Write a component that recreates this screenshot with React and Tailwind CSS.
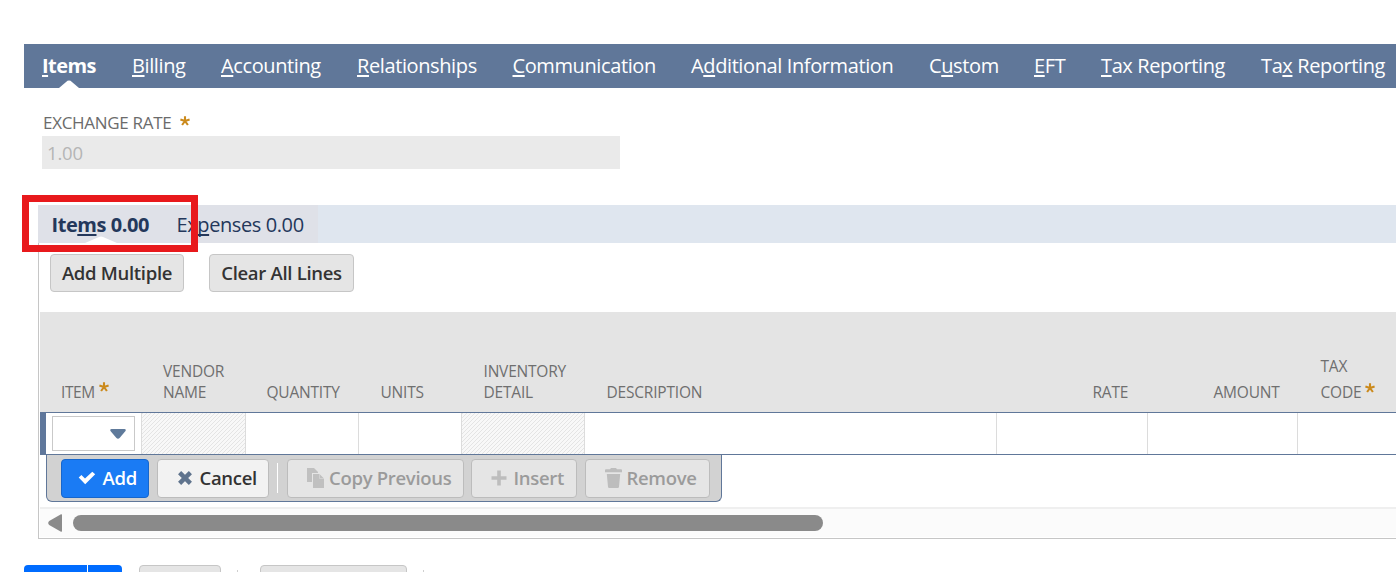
import React from "react";

const Star = ({ className = "" }) => (
  <svg viewBox="0 0 10 10" className={`h-[10px] w-[10px] shrink-0 ${className}`} fill="none" stroke="#cb8a1c" strokeWidth="2.1">
    <path d="M5 5V0.3M5 5L9.6 3.5M5 5L7.9 9M5 5L2.1 9M5 5L0.4 3.5" />
  </svg>
);

const CheckIcon = () => (
  <svg viewBox="0 0 18 14" className="h-[14px] w-[18px] shrink-0" fill="#fff">
    <path d="M0.7 6.6L3.4 4L7 7.4L14.3 0.7L17.2 3.2L7.2 13.2Z" />
  </svg>
);

const TimesIcon = () => (
  <svg viewBox="0 0 14 14" className="h-[14px] w-[14px] shrink-0" fill="none" stroke="#5f738d" strokeWidth="4.4">
    <path d="M1.6 1.6L12.4 12.4M12.4 1.6L1.6 12.4" />
  </svg>
);

const CopyIcon = () => (
  <svg viewBox="0 0 17 20" className="h-5 w-[17px] shrink-0" fill="#c0c0c0">
    <path d="M0 0H7L11 4V5H5V14H0Z" />
    <path d="M6 6H12.5L17 10.5V20H6Z" />
    <path d="M12.5 6V10.5H17" fill="none" stroke="#d6d6d6" strokeWidth="0.8" />
  </svg>
);

const PlusIcon = () => (
  <svg viewBox="0 0 16 16" className="h-4 w-4 shrink-0" fill="none" stroke="#bdbdbd" strokeWidth="3.6">
    <path d="M8 0.5V15.5M0.5 8H15.5" />
  </svg>
);

const TrashIcon = () => (
  <svg viewBox="0 0 17 20" className="h-5 w-[17px] shrink-0" fill="#bdbdbd">
    <path d="M0 2.2Q0 1.3 1 1.3H5L6 0H11L12 1.3H16Q17 1.3 17 2.2V4.3H0ZM1.8 6H15.2L14 18.8Q13.9 20 12.8 20H4.2Q3.1 20 3 18.8Z" />
  </svg>
);

const Key = ({ children }) => (
  <span className="underline decoration-[1.5px] underline-offset-[2px] [text-decoration-skip-ink:none]">{children}</span>
);

const tabs = [
  ["", "I", "tems", "w-[90px] font-bold tracking-[-0.55px]"],
  ["", "B", "illing", "w-[89px]"],
  ["", "A", "ccounting", "w-[136px]"],
  ["", "R", "elationships", "w-[155.5px]"],
  ["", "C", "ommunication", "w-[178.5px]"],
  ["A", "d", "ditional Information", "w-[238px]"],
  ["C", "u", "stom", "w-[105px]"],
  ["", "E", "FT", "w-[67px]"],
  ["", "T", "ax Reporting", "w-[160px]"],
  ["Ta", "x", " Reporting", "w-[136px]"],
];

const hatch = "bg-[repeating-linear-gradient(135deg,#e4e4e4_0_1px,#f8f8f8_1px_2.83px)]";

const cells = [
  "w-[104px] " + hatch,
  "w-[113px]",
  "w-[103px]",
  "w-[123px] " + hatch,
  "w-[412px]",
  "w-[151px]",
  "w-[150px]",
  "w-[98px]",
];

const btn = "flex shrink-0 items-center rounded-[4px] border-[1.5px] whitespace-nowrap font-semibold text-[18.5px] tracking-[-0.3px]";
const disabled = "border-[#bcbcbc] bg-[#e5e5e5] text-[#9b9b9b]";

export default function App() {
  return (
    <div className="relative h-[572px] w-[1396px] overflow-hidden bg-white pt-[44px] font-['Open_Sans',sans-serif]">
      <nav className="relative ml-[24px] flex h-[43.5px] items-center bg-[#607799] pl-[18px] text-[20px] leading-[27px] tracking-[-0.39px] text-white">
        {tabs.map(([a, k, b, c], i) => (
          <span key={i} className={`shrink-0 whitespace-nowrap ${c}`}>
            {a}<Key>{k}</Key>{b}
          </span>
        ))}
        <svg viewBox="0 0 20 8" className="absolute bottom-0 left-[35px] h-[8px] w-[20px]" fill="#fff"><path d="M0 8L8.5 0.8Q10 0 11.5 0.8L20 8Z" /></svg>
      </nav>

      <div className="ml-[42px] mt-[23.5px] flex h-[25px] items-center pb-px pl-px text-[17px] text-[#6b6b6b]">
        <span className="tracking-[-0.3px]">EXCHANGE RATE</span>
        <Star className="mb-[5px] ml-[9px]" />
      </div>
      <div className="ml-[42px] flex h-[33px] w-[578px] items-center bg-[#eaeaea] pl-[5px] text-[18.5px] tracking-[-0.2px] text-[#b5b5b5]">1.00</div>

      <div className="ml-[38px] mt-[36px] flex h-[37.5px] bg-[#dfe6ef] text-[20px] tracking-[-0.4px] text-[#24385b]">
        <div className="relative flex h-full w-[280px] items-center bg-[#dfe1e8] pl-[13.5px] pt-[2px]">
          <span className="w-[125px] shrink-0 whitespace-nowrap font-bold tracking-[-0.45px]">Ite<Key>m</Key>s 0.00</span>
          <span className="whitespace-nowrap">Ex<Key>p</Key>enses 0.00</span>
          <svg viewBox="0 0 32 7" className="absolute bottom-0 left-[47px] h-[7px] w-[32px]" fill="#fff"><path d="M0 7L14 1Q16 0 18 1L32 7Z" /></svg>
        </div>
      </div>

      <section className="ml-[38px] h-[296.5px] border-b-[1.5px] border-l border-[#c6c6c6]">
        <div className="flex h-[69.5px] gap-[25px] pl-[11px] pt-[11.5px] text-[#333]">
          <button className={`${btn} h-[38px] w-[134px] justify-center border-[#c6c6c6] bg-[#e5e5e5]`}>Add Multiple</button>
          <button className={`${btn} h-[38px] w-[145px] justify-center border-[#c6c6c6] bg-[#e5e5e5]`}>Clear All Lines</button>
        </div>

        <div className="ml-px flex h-[100px] items-end bg-[#e4e4e4] pb-[10px] pl-[21px] text-[15.5px] leading-[20.5px] tracking-[-0.2px] text-[#6f6f6f]">
          <div className="flex w-[102px] shrink-0 tracking-[-0.4px]">ITEM<Star className="ml-[4px]" /></div>
          <div className="w-[103.5px] shrink-0">VENDOR<br />NAME</div>
          <div className="w-[114px] shrink-0">QUANTITY</div>
          <div className="w-[103px] shrink-0">UNITS</div>
          <div className="w-[123px] shrink-0">INVENTORY<br />DETAIL</div>
          <div className="w-[486px] shrink-0">DESCRIPTION</div>
          <div className="w-[121px] shrink-0">RATE</div>
          <div className="w-[107px] shrink-0">AMOUNT</div>
          <div className="w-[75px] shrink-0 leading-[25.5px] -mb-[3px]">TAX<div className="flex">CODE<Star className="ml-[4px] mt-[3px]" /></div></div>
        </div>

        <div className="ml-px flex h-[43px] border-y border-[#607799] bg-white">
          <div className="w-[6px] shrink-0 bg-[#5f779b]" />
          <div className="flex w-[95px] shrink-0 items-center pl-[6px]">
            <div className="flex h-[35px] w-[83px] items-center justify-end border border-[#c9c9c9] pr-[8px]">
              <svg viewBox="0 0 16 10" className="h-[10px] w-[16px]" fill="#5f7a9b"><path d="M1.5 0H14.5Q16.3 0.2 15.5 2L9.8 8.7Q8 10.7 6.2 8.7L0.5 2Q-0.3 0.2 1.5 0Z" /></svg>
            </div>
          </div>
          {cells.map((c, i) => (
            <div key={i} className={`shrink-0 border-l border-[#dcdcdc] ${c}`} />
          ))}
        </div>

        <div className="ml-[7px] flex h-[47px] w-[676px] rounded-b-[6px] border-[1.5px] border-t-0 border-[#607799] bg-[#d2d2d2] pl-[13.5px] pt-[3.5px]">
          <button className={`${btn} h-[39px] w-[88px] gap-[7px] border-[#1766cb] bg-[#1a7bf4] pl-[16px] text-white`}><CheckIcon />Add</button>
          <button className={`${btn} ml-[8px] h-[39px] w-[112px] gap-[8px] border-[#bcbcbc] bg-[#f2f2f2] pl-[20px] text-[#333]`}><TimesIcon />Cancel</button>
          <div className="ml-[8px] mt-[4px] h-[30px] w-[1.5px] bg-white" />
          <button className={`${btn} ${disabled} ml-[8.5px] h-[39px] w-[177px] gap-[5px] pl-[19.5px]`}><CopyIcon />Copy Previous</button>
          <button className={`${btn} ${disabled} ml-[7px] h-[39px] w-[106px] gap-[7px] pl-[19px]`}><PlusIcon />Insert</button>
          <button className={`${btn} ${disabled} ml-[8px] h-[39px] w-[125px] gap-[5px] pl-[19px]`}><TrashIcon />Remove</button>
        </div>

        <div className="ml-px mt-[4.5px] flex h-[30.5px] items-center border-t-2 border-[#efefef] bg-[#fbfbfb] pl-[8px]">
          <svg viewBox="0 0 14 18" className="h-[18px] w-[14px]" fill="#8b8b8b"><path d="M13 0.3Q14 0 14 1V17Q14 18 13 17.7L1.2 11Q-0.8 9 1.2 7Z" /></svg>
          <div className="ml-[11px] h-[16px] w-[750px] rounded-full bg-[#8a8a8a]" />
        </div>
      </section>

      <div className="ml-[24px] mt-[26px] flex h-[40px]">
        <div className="h-full w-[63px] rounded-l-[4px] bg-[#006cff]" />
        <div className="ml-px h-full w-[34px] rounded-r-[4px] bg-[#006cff]" />
        <div className="ml-[17px] h-full w-[82px] rounded-[4px] border-[1.5px] border-[#c6c6c6] bg-[#e5e5e5]" />
        <div className="ml-[16px] mt-[5px] h-full w-px bg-[#cfcfcf]" />
        <div className="ml-[22px] h-full w-[147px] rounded-[4px] border-[1.5px] border-[#c6c6c6] bg-[#e5e5e5]" />
        <div className="ml-[16px] mt-[5px] h-full w-px bg-[#cfcfcf]" />
      </div>

      <div className="absolute left-[22px] top-[195px] h-[57px] w-[176px] border-[7px] border-[#e8191c]" />
    </div>
  );
}
